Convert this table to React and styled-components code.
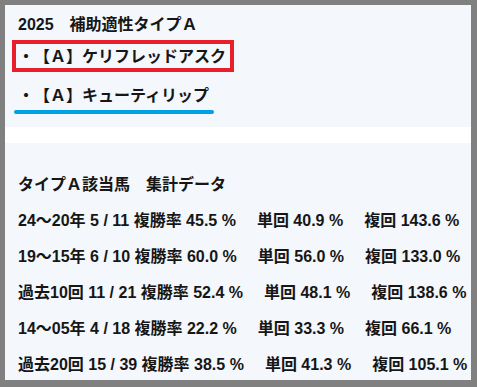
import React from "react";
import styled, { createGlobalStyle } from "styled-components";

const GlobalStyle = createGlobalStyle`
  html, body {
    margin: 0;
    padding: 0;
    background: #808080;
  }
  body {
    font-family: "Liberation Sans", "Noto Sans CJK JP", sans-serif;
    text-spacing-trim: space-all;
  }
`;

const Frame = styled.div`
  width: 477px;
  height: 387px;
  box-sizing: border-box;
  border-style: solid;
  border-color: #808080;
  border-width: 5px 6px 7px 5px;
  background: #f4f7fb;
  display: flex;
  flex-direction: column;
  color: #161616;
  font-size: 16px;
  font-weight: bold;
  overflow: hidden;
  text-spacing-trim: space-all;
`;

const Picks = styled.section`
  display: flex;
  flex-direction: column;
  align-items: flex-start;
  padding: 8px 7px 13px;
`;

const Line = styled.div`
  line-height: 24px;
  padding-left: 6px;
  white-space: nowrap;
`;

const Jp = styled.span`
  font-family: "Noto Sans CJK JP", sans-serif;
  text-spacing-trim: space-all;
`;

const Boxed = styled.div`
  margin-top: 3px;
  border: 4px solid #e8202a;
  padding: 0 4px 0 2px;
  line-height: 23px;
  white-space: nowrap;
`;

const Marked = styled.div`
  margin-top: 10px;
  margin-left: 2px;
  display: inline-flex;
  flex-direction: column;
  gap: 2px;
`;

const MarkedText = styled.span`
  line-height: 24px;
  padding: 0 5px 0 4px;
  white-space: nowrap;
`;

const Bar = styled.span`
  display: block;
  height: 4px;
  border-radius: 2px;
  background: #00a0e6;
`;

const Divider = styled.div`
  height: 16px;
  background: #ffffff;
`;

const Stats = styled.section`
  flex: 1;
  display: flex;
  flex-direction: column;
  gap: 12px;
  padding: 30px 7px 0 13px;
`;

const Row = styled.div`
  line-height: 24px;
  white-space: nowrap;
`;

const Cell = styled.span`
  margin-left: ${({ $gap }) => $gap ?? 0}px;
`;

const rows = [
  { label: "24〜20年 5 / 11 複勝率 45.5 %", win: "40.9", place: "143.6" },
  { label: "19〜15年 6 / 10 複勝率 60.0 %", win: "56.0", place: "133.0" },
  { label: "過去10回 11 / 21 複勝率 52.4 %", win: "48.1", place: "138.6" },
  { label: "14〜05年 4 / 18 複勝率 22.2 %", win: "33.3", place: "66.1" },
  { label: "過去20回 15 / 39 複勝率 38.5 %", win: "41.3", place: "105.1" },
];

export default function App() {
  return (
    <>
      <GlobalStyle />
      <Frame lang="ja">
        <Picks>
          <Line>2025　補助適性タイプＡ</Line>
          <Boxed>
            <Jp>・【Ａ】ケリフレッドアスク</Jp>
          </Boxed>
          <Marked>
            <MarkedText>
              <Jp>・【Ａ】キューティリップ</Jp>
            </MarkedText>
            <Bar />
          </Marked>
        </Picks>
        <Divider />
        <Stats>
          <Row>タイプＡ該当馬　集計データ</Row>
          {rows.map((r) => (
            <Row key={r.label}>
              <Cell>{r.label}</Cell>
              <Cell $gap={21}>単回 {r.win} %</Cell>
              <Cell $gap={21}>複回 {r.place} %</Cell>
            </Row>
          ))}
        </Stats>
      </Frame>
    </>
  );
}
